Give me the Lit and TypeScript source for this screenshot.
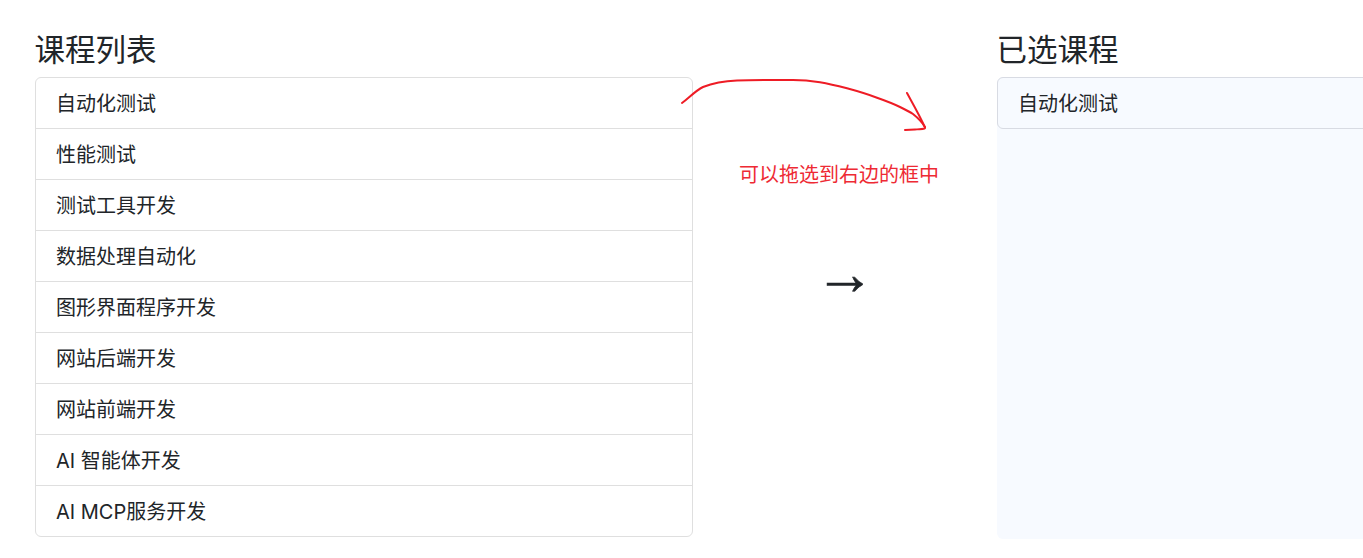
import { LitElement, html, css } from 'lit'
import { customElement } from 'lit/decorators.js'

const COURSES = [
  '自动化测试',
  '性能测试',
  '测试工具开发',
  '数据处理自动化',
  '图形界面程序开发',
  '网站后端开发',
  '网站前端开发',
  'AI 智能体开发',
  'AI MCP服务开发',
]

@customElement('app-root')
export class AppRoot extends LitElement {
  static styles = css`
    :host {
      display: block;
      position: relative;
      width: 100vw;
      height: 100vh;
      overflow: hidden;
      background: #fff;
      color: #212529;
      font-family: 'Inter', 'Noto Sans CJK SC', sans-serif;
      font-size: 20px;
      line-height: 30px;
    }
    .page {
      display: flex;
      width: 1620px;
      padding: 31px 0 0 35px;
      box-sizing: content-box;
    }
    .col {
      flex: 0 0 658px;
      display: flex;
      flex-direction: column;
    }
    h4 {
      margin: 1px 0 9px -0.5px;
      font-size: 30.5px;
      line-height: 36px;
      font-weight: 400;
    }
    .list {
      border: 1px solid #dfdfdf;
      border-radius: 6px;
    }
    .item {
      padding: 11px 20px 9px;
      border-top: 1px solid #dfdfdf;
    }
    .item:first-child {
      border-top: 0;
    }
    .middle {
      flex: 0 0 304px;
      display: flex;
      align-items: center;
      justify-content: center;
    }
    .arrow {
      font-family: 'Liberation Sans', sans-serif;
      font-size: 60px;
      line-height: 1;
      margin-bottom: 22px;
      -webkit-text-stroke: 0.6px #212529;
    }
    .panel {
      height: 462px;
      background: #f7faff;
      border-radius: 6px;
    }
    .chosen {
      padding: 11px 20px 9px;
      border: 1px solid #d8dbe3;
      border-radius: 6px;
    }
    .note {
      position: absolute;
      left: 739px;
      top: 160px;
      color: #ee2a34;
    }
    .curve {
      position: absolute;
      left: 670px;
      top: 70px;
    }
    .curve path {
      fill: none;
      stroke: #ee1c25;
      stroke-width: 2;
      stroke-linecap: round;
      stroke-linejoin: round;
    }
  `

  render() {
    return html`
      <div class="page">
        <section class="col">
          <h4>课程列表</h4>
          <div class="list">
            ${COURSES.map((c) => html`<div class="item">${c}</div>`)}
          </div>
        </section>
        <div class="middle"><span class="arrow">→</span></div>
        <section class="col">
          <h4>已选课程</h4>
          <div class="panel">
            <div class="chosen">自动化测试</div>
          </div>
        </section>
      </div>
      <svg class="curve" width="270" height="70" viewBox="670 70 270 70">
        <path d="M682 103C689 98 695 91 703 87C713 83 725 81 737 80.5C755 79.7 775 80 793 80C803 80 812 81 820 82.3C830 84 838 86 847 88.3C857 91 867 94 877 97.7C885 100.5 893 103.5 900 107C906 110 910 112 913 114C918 118 922 122 925 127" />
        <path d="M907 93C913 104 920 116 925 127.5C925.5 129 923 129 915 129.5L905 130" />
      </svg>
      <div class="note">可以拖选到右边的框中</div>
    `
  }
}
